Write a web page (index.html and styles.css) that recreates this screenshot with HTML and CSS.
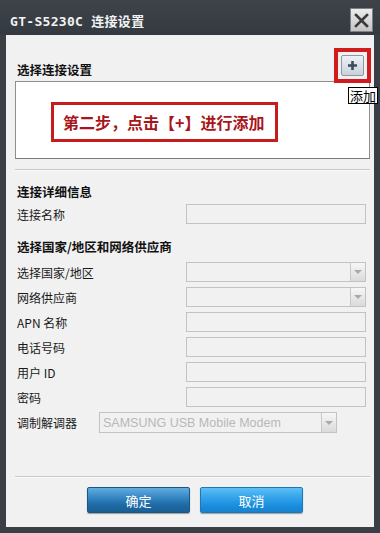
FILE: index.html
```html
<!DOCTYPE html>
<html lang="zh-CN">
<head>
<meta charset="utf-8">
<title>GT-S5230C 连接设置</title>
<link rel="stylesheet" href="styles.css">
</head>
<body>
<div class="window">
  <div class="titlebar">
    <span class="title">GT-S5230C 连接设置</span>
    <span class="close">
      <svg width="15" height="15" viewBox="0 0 15 15"><path d="M2 2 L13 13 M13 2 L2 13" stroke="#3a3a3a" stroke-width="2.6" stroke-linecap="square" fill="none"/></svg>
    </span>
  </div>
  <div class="content">
    <div class="head-row">
      <h2 class="section">选择连接设置</h2>
      <div class="plus-mark">
        <span class="plus-btn">
          <svg width="11" height="11" viewBox="0 0 11 11"><path d="M5.5 1 V10 M1 5.5 H10" stroke="#3c4c5e" stroke-width="2.6" fill="none"/></svg>
        </span>
        <span class="tooltip">添加</span>
      </div>
    </div>
    <div class="listbox">
      <div class="annot">第二步，点击【+】进行添加</div>
    </div>
    <div class="sep"></div>

    <h2 class="section s2">连接详细信息</h2>
    <div class="row"><span class="label">连接名称</span><span class="field"></span></div>

    <h2 class="section s3">选择国家/地区和网络供应商</h2>
    <div class="rows">
      <div class="row"><span class="label">选择国家/地区</span><span class="field select"><span class="arrow"></span></span></div>
      <div class="row"><span class="label">网络供应商</span><span class="field select"><span class="arrow"></span></span></div>
      <div class="row"><span class="label">APN 名称</span><span class="field"></span></div>
      <div class="row"><span class="label">电话号码</span><span class="field"></span></div>
      <div class="row"><span class="label">用户 ID</span><span class="field"></span></div>
      <div class="row"><span class="label">密码</span><span class="field"></span></div>
      <div class="row modem"><span class="label">调制解调器</span><span class="field select wide"><span class="value">SAMSUNG USB Mobile Modem</span><span class="arrow"></span></span></div>
    </div>

    <div class="sep bottom"></div>
    <div class="buttons">
      <span class="btn ok">确定</span>
      <span class="btn cancel">取消</span>
    </div>
  </div>
</div>
</body>
</html>
```
FILE: styles.css
```css
html, body {
  margin: 0;
  padding: 0;
}
body {
  width: 380px;
  height: 533px;
  overflow: hidden;
  background: #3a3f46;
  font-family: "Noto Sans CJK SC", "Liberation Sans", sans-serif;
}
.window {
  width: 380px;
  height: 533px;
  display: flex;
  flex-direction: column;
}
.titlebar {
  height: 35px;
  box-sizing: border-box;
  padding: 5px 7px 0 10px;
  display: flex;
  align-items: center;
  justify-content: space-between;
  background: linear-gradient(#3e434a, #353a41);
}
.title {
  color: #f2f2f2;
  font-family: "DejaVu Sans Mono", "Noto Sans CJK SC", monospace;
  font-weight: bold;
  font-size: 13px;
  letter-spacing: 0.3px;
}
.close {
  width: 23px;
  height: 24px;
  box-sizing: border-box;
  border: 1px solid #7d8086;
  background: linear-gradient(#ececec, #c4c4c4);
  display: flex;
  align-items: center;
  justify-content: center;
}
.content {
  margin: 0 6px;
  height: 492px;
  box-sizing: border-box;
  background: #f1f1f1;
  padding: 13px 4px 0 9px;
  display: flex;
  flex-direction: column;
}
.section {
  margin: 0;
  padding-left: 2px;
  font-size: 12.5px;
  font-weight: bold;
  line-height: 18px;
  color: #111;
}
.head-row {
  height: 35px;
  margin-bottom: -2px;
  display: flex;
  justify-content: space-between;
  align-items: flex-end;
}
.head-row .section {
  padding-bottom: 4px;
}
.plus-mark {
  position: relative;
  z-index: 1;
  width: 37px;
  height: 35px;
  box-sizing: border-box;
  margin-right: -1px;
  border: 4px solid #d01c1c;
  display: flex;
  align-items: center;
  justify-content: center;
}
.plus-btn {
  width: 23px;
  height: 21px;
  box-sizing: border-box;
  border: 1px solid #8c98a6;
  border-radius: 2px;
  background: linear-gradient(#eef2f6, #c9d1da);
  display: flex;
  align-items: center;
  justify-content: center;
}
.tooltip {
  position: absolute;
  left: 10px;
  top: 35px;
  width: 30px;
  height: 17px;
  box-sizing: border-box;
  border: 1px solid #000;
  background: #fff;
  font-size: 13px;
  line-height: 15px;
  text-align: center;
  color: #000;
}
.listbox {
  height: 78px;
  box-sizing: border-box;
  border: 1px solid #8f8f8f;
  border-bottom-color: #7a7a7a;
  background: #fff;
  padding: 20px 0 0 35px;
}
.annot {
  display: inline-block;
  border: 3px solid #c81b1b;
  background: #fff;
  color: #a8151a;
  font-size: 16px;
  font-weight: bold;
  line-height: 34px;
  padding: 0 11px 0 9px;
  white-space: nowrap;
}
.sep {
  height: 1px;
  background: #c9c9c9;
  border-bottom: 1px solid #fbfbfb;
  margin-top: 10px;
}
.s2 {
  margin-top: 12px;
}
.s3 {
  margin-top: 14px;
}
.row {
  display: grid;
  grid-template-columns: 171px 180px;
  align-items: center;
  height: 20px;
  margin-top: 3px;
}
.label {
  padding-left: 2px;
  font-size: 12px;
  color: #1a1a1a;
  white-space: nowrap;
}
.field {
  height: 20px;
  box-sizing: border-box;
  border: 1px solid #c3c3c3;
  background: #f1f1f1;
  display: flex;
  justify-content: flex-end;
}
.rows {
  margin-top: 6px;
  display: flex;
  flex-direction: column;
  gap: 5px;
}
.rows .row {
  margin-top: 0;
}
.arrow {
  width: 15px;
  height: 100%;
  box-sizing: border-box;
  border-left: 1px solid #c8c8c8;
  background: linear-gradient(#f7f7f7, #dadada);
  display: flex;
  justify-content: center;
  padding-top: 7px;
}
.arrow::after {
  content: "";
  width: 0;
  height: 0;
  border-left: 4px solid transparent;
  border-right: 4px solid transparent;
  border-top: 4px solid #a9a9a9;
}
.row.modem {
  grid-template-columns: 84px 238px;
  height: 21px;
}
.field.wide {
  height: 21px;
  justify-content: space-between;
  align-items: center;
}
.value {
  padding-left: 3px;
  font-family: "Liberation Sans", "DejaVu Sans", sans-serif;
  font-size: 12.5px;
  color: #b8b8b8;
  white-space: nowrap;
}
.field.wide .arrow {
  height: 100%;
  padding-top: 8px;
}
.sep.bottom {
  margin-top: 43px;
}
.buttons {
  margin-top: 9px;
  padding-left: 72px;
  display: flex;
  gap: 10px;
}
.btn {
  width: 103px;
  height: 26px;
  box-sizing: border-box;
  border-radius: 2px;
  color: #fff;
  font-size: 13px;
  line-height: 26px;
  text-align: center;
  box-shadow: 0 1px 1px rgba(0, 0, 0, 0.35);
}
.ok {
  background: linear-gradient(#62addf 0%, #3a8bc6 35%, #1e6ba6 70%, #1a5f93 100%);
  border: 1px solid #1b5580;
}
.cancel {
  background: linear-gradient(#5cc0f5 0%, #33a3ea 40%, #1a8ddc 75%, #1683cf 100%);
  border: 1px solid #1d78b8;
}
```
